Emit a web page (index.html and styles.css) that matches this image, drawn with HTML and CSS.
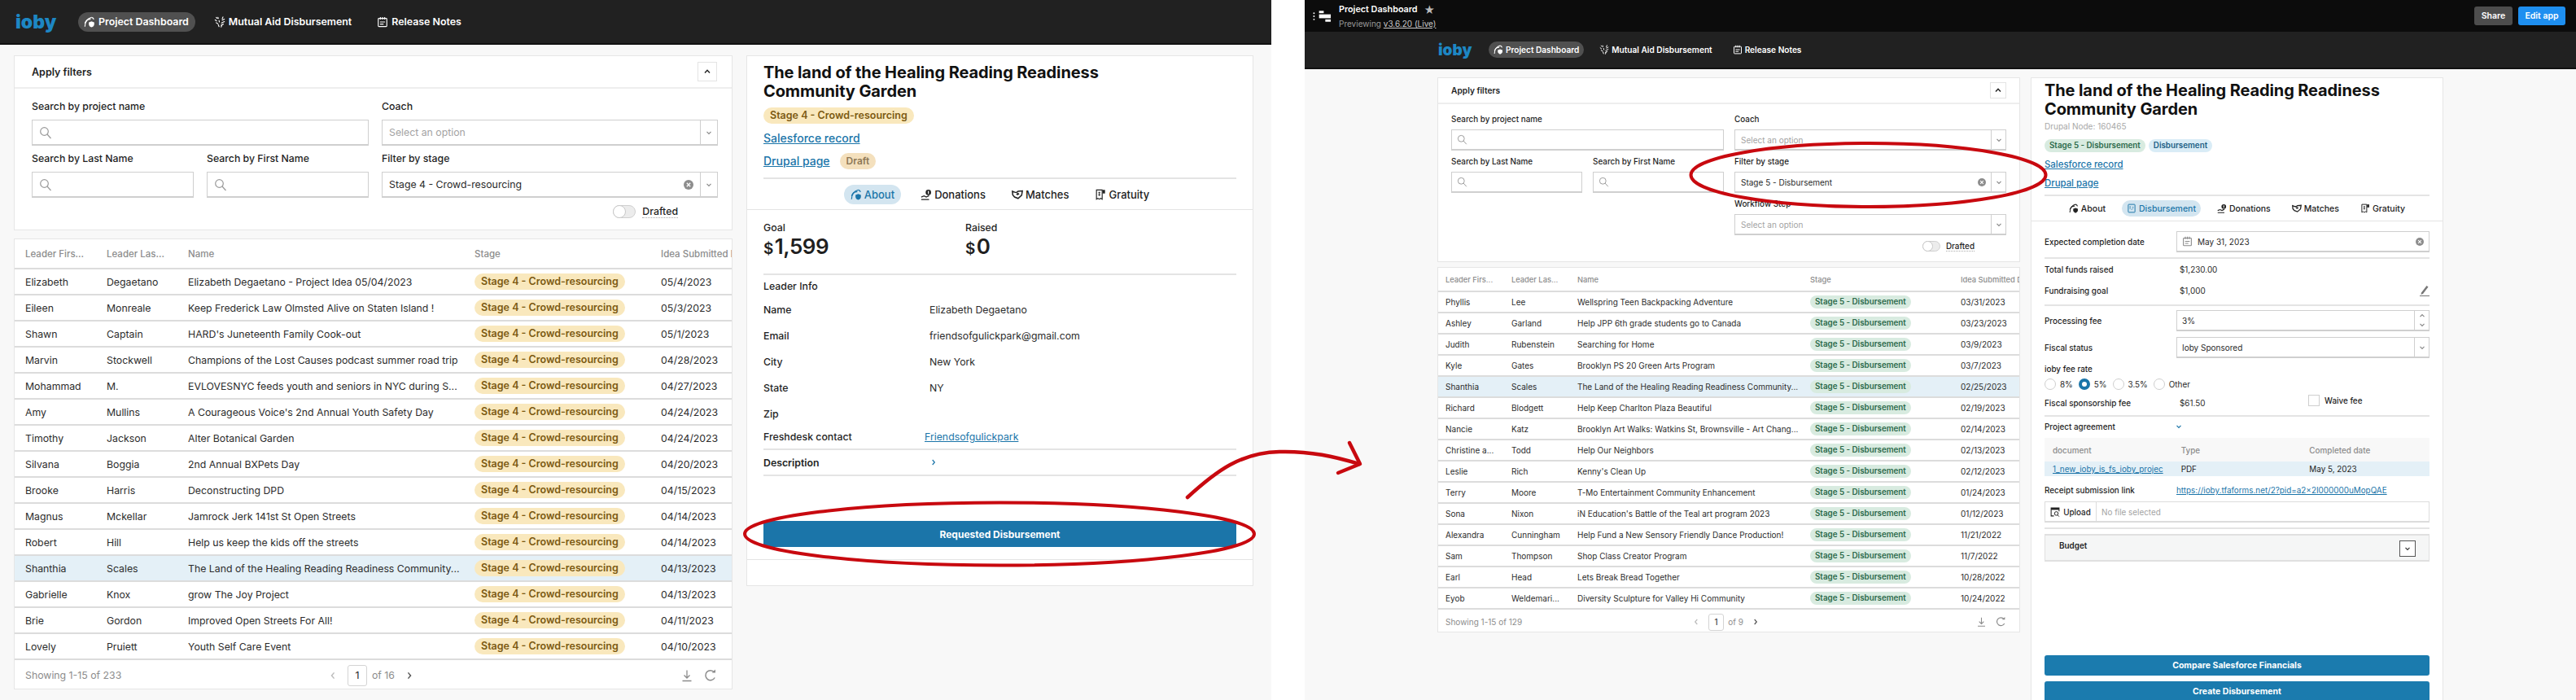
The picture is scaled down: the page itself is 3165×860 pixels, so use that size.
FILE: index.html
```html
<!DOCTYPE html>
<html lang="en">
<head>
<meta charset="utf-8">
<title>Project Dashboard</title>
<link rel="stylesheet" href="styles.css">
</head>
<body>
<svg class="defs" aria-hidden="true">
  <symbol id="i-home" viewBox="0 0 16 16"><path d="M1.5 14.5C1.5 8 5 2.5 11 1.5" fill="none" stroke="currentColor" stroke-width="1.4"/><path d="M1.5 10C3 6 6 4 9.5 4.2M11 1.5c1.6.4 2.6 1.400 3 3" fill="none" stroke="currentColor" stroke-width="1.400"/><path d="M7 8.500l3.800-1.300 3.800 1.300v2.500c0 2.200-1.600 3.600-3.800 4.500-2.200-.9-3.800-2.300-3.800-4.500z" fill="currentColor"/></symbol>
  <symbol id="i-wheat" viewBox="0 0 16 16"><g fill="none" stroke="currentColor" stroke-width="1.300" stroke-linecap="round"><path d="M3 1.500l1.500 1.500M1.500 5l2 1.500M3 9l2.500 1.500M6 12l1 2.500M10 15l1-3M12.500 1l-1 2.500M14.500 4l-3 1.500M14.500 7.500l-4 2M13 11l-3 1.500M5.500 1.500l.5 1.500M7 6l.5 2"/></g></symbol>
  <symbol id="i-cal" viewBox="0 0 16 16"><g fill="none" stroke="currentColor" stroke-width="1.300"><rect x="2" y="3" width="12" height="11.500" rx="1"/><path d="M5 1v3.500M8 1v3.500M11 1v3.500M4.500 8h7M4.500 11h5"/></g></symbol>
  <symbol id="i-don" viewBox="0 0 16 16"><circle cx="11" cy="5" r="3.800" fill="currentColor"/><rect x="10.300" y="3" width="1.400" height="4" fill="#fff"/><path d="M1 15h11M1 11.500l4-1.500 3 1.500 4-2" fill="none" stroke="currentColor" stroke-width="1.500"/></symbol>
  <symbol id="i-match" viewBox="0 0 16 16"><path d="M1 3.500l4 1.500h2l2-1.500 6-.5-1 6-5 4.500-5-2-2.500-3z" fill="none" stroke="currentColor" stroke-width="1.700"/><path d="M6 7l3-1.500 2 2-3 1.500z" fill="currentColor"/></symbol>
  <symbol id="i-grat" viewBox="0 0 16 16"><path d="M2.500 1.500h8v13l-2-1.200-2 1.200-2-1.200-2 1.200z" fill="none" stroke="currentColor" stroke-width="1.300"/><path d="M6.500 4v6M5 5.500h3M5 8.500h3" fill="none" stroke="currentColor"/><path d="M11 1.500h3.500v5H11z" fill="currentColor"/></symbol>
  <symbol id="i-doc" viewBox="0 0 16 16"><rect x="2.500" y="1.500" width="11" height="13" rx="1" fill="none" stroke="currentColor" stroke-width="1.300"/><path d="M5.500 4v5M7.500 10.500l3-3M9 6h2" fill="none" stroke="currentColor"/></symbol>
  <symbol id="i-upload" viewBox="0 0 16 16"><path d="M6 14.500H1.500v-13h13V7" fill="none" stroke="currentColor" stroke-width="1.400"/><path d="M1.500 1.500h13v3h-13z" fill="currentColor"/><circle cx="10" cy="10.500" r="3" fill="none" stroke="currentColor" stroke-width="1.300"/><path d="M12 13l2.500 2.500" stroke="currentColor" stroke-width="1.300"/></symbol>
  <symbol id="i-search" viewBox="0 0 16 16"><circle cx="6.500" cy="6.500" r="4.800" fill="none" stroke="currentColor" stroke-width="1.200"/><path d="M10 10l4.500 5" fill="none" stroke="currentColor" stroke-width="1.200"/></symbol>
  <symbol id="i-down" viewBox="0 0 10 10"><path d="M2.500 3.800L5 6.400l2.500-2.600" fill="none" stroke="currentColor" stroke-width="1.200"/></symbol>
  <symbol id="i-up" viewBox="0 0 10 10"><path d="M2.500 6.200L5 3.600l2.500 2.600" fill="none" stroke="currentColor" stroke-width="1.200"/></symbol>
  <symbol id="i-left" viewBox="0 0 10 10"><path d="M6.300 2L3.700 5l2.600 3" fill="none" stroke="currentColor" stroke-width="1.200"/></symbol>
  <symbol id="i-right" viewBox="0 0 10 10"><path d="M3.700 2l2.600 3-2.600 3" fill="none" stroke="currentColor" stroke-width="1.200"/></symbol>
  <symbol id="i-clear" viewBox="0 0 12 12"><circle cx="6" cy="6" r="6" fill="currentColor"/><path d="M3.800 3.800l4.400 4.400M8.200 3.800L3.800 8.200" stroke="#fff" stroke-width="1.300"/></symbol>
  <symbol id="i-dl" viewBox="0 0 16 16"><path d="M8 1.500v9M4.500 7.500L8 11l3.500-3.500M2.500 14.500h11" fill="none" stroke="currentColor" stroke-width="1.300"/></symbol>
  <symbol id="i-rf" viewBox="0 0 16 16"><path d="M13.200 10.500A6 6 0 1 1 12.500 3.800" fill="none" stroke="currentColor" stroke-width="1.500"/><path d="M9.500 4.500h4.500V.5z" fill="currentColor"/></symbol>
</svg>

<section class="screen screen-a">
  <nav class="nav">
    <span class="logo">ioby</span>
    <a class="nav-item is-active"><svg class="ico"><use href="#i-home"/></svg>Project Dashboard</a>
    <a class="nav-item"><svg class="ico"><use href="#i-wheat"/></svg>Mutual Aid Disbursement</a>
    <a class="nav-item"><svg class="ico"><use href="#i-cal"/></svg>Release Notes</a>
  </nav>
  <main class="main">
    <div class="col-list">
      <section class="card filters">
        <header class="filters-head"><h2>Apply filters</h2><button class="collapse"><svg><use href="#i-up"/></svg></button></header>
        <div class="filters-grid">
          <div class="field span-2"><label>Search by project name</label><div class="input"><svg class="search"><use href="#i-search"/></svg></div></div>
          <div class="field"><label>Coach</label><div class="input select"><span class="ph">Select an option</span><span class="arrow"><svg><use href="#i-down"/></svg></span></div></div>
          <div class="field"><label>Search by Last Name</label><div class="input"><svg class="search"><use href="#i-search"/></svg></div></div>
          <div class="field"><label>Search by First Name</label><div class="input"><svg class="search"><use href="#i-search"/></svg></div></div>
          <div class="field"><label>Filter by stage</label><div class="input select"><span class="val">Stage 4 - Crowd-resourcing</span><svg class="clear"><use href="#i-clear"/></svg><span class="arrow"><svg><use href="#i-down"/></svg></span></div></div>
        </div>
        <div class="toggle-row"><span class="toggle"></span><span class="toggle-label">Drafted</span></div>
      </section>
      <section class="card list">
        <table class="grid">
          <colgroup><col class="c1"><col class="c2"><col class="c3"><col class="c4"><col class="c5"></colgroup>
          <thead><tr><th>Leader Firs...</th><th>Leader Las...</th><th>Name</th><th>Stage</th><th>Idea Submitted D</th></tr></thead>
          <tbody>
            <tr><td>Elizabeth</td><td>Degaetano</td><td>Elizabeth Degaetano - Project Idea 05/04/2023</td><td><span class="badge yellow">Stage 4 - Crowd-resourcing</span></td><td>05/4/2023</td></tr>
            <tr><td>Eileen</td><td>Monreale</td><td>Keep Frederick Law Olmsted Alive on Staten Island !</td><td><span class="badge yellow">Stage 4 - Crowd-resourcing</span></td><td>05/3/2023</td></tr>
            <tr><td>Shawn</td><td>Captain</td><td>HARD's Juneteenth Family Cook-out</td><td><span class="badge yellow">Stage 4 - Crowd-resourcing</span></td><td>05/1/2023</td></tr>
            <tr><td>Marvin</td><td>Stockwell</td><td>Champions of the Lost Causes podcast summer road trip</td><td><span class="badge yellow">Stage 4 - Crowd-resourcing</span></td><td>04/28/2023</td></tr>
            <tr><td>Mohammad</td><td>M.</td><td>EVLOVESNYC feeds youth and seniors in NYC during S...</td><td><span class="badge yellow">Stage 4 - Crowd-resourcing</span></td><td>04/27/2023</td></tr>
            <tr><td>Amy</td><td>Mullins</td><td>A Courageous Voice's 2nd Annual Youth Safety Day</td><td><span class="badge yellow">Stage 4 - Crowd-resourcing</span></td><td>04/24/2023</td></tr>
            <tr><td>Timothy</td><td>Jackson</td><td>Alter Botanical Garden</td><td><span class="badge yellow">Stage 4 - Crowd-resourcing</span></td><td>04/24/2023</td></tr>
            <tr><td>Silvana</td><td>Boggia</td><td>2nd Annual BXPets Day</td><td><span class="badge yellow">Stage 4 - Crowd-resourcing</span></td><td>04/20/2023</td></tr>
            <tr><td>Brooke</td><td>Harris</td><td>Deconstructing DPD</td><td><span class="badge yellow">Stage 4 - Crowd-resourcing</span></td><td>04/15/2023</td></tr>
            <tr><td>Magnus</td><td>Mckellar</td><td>Jamrock Jerk 141st St Open Streets</td><td><span class="badge yellow">Stage 4 - Crowd-resourcing</span></td><td>04/14/2023</td></tr>
            <tr><td>Robert</td><td>Hill</td><td>Help us keep the kids off the streets</td><td><span class="badge yellow">Stage 4 - Crowd-resourcing</span></td><td>04/14/2023</td></tr>
            <tr class="is-selected"><td>Shanthia</td><td>Scales</td><td>The Land of the Healing Reading Readiness Community...</td><td><span class="badge yellow">Stage 4 - Crowd-resourcing</span></td><td>04/13/2023</td></tr>
            <tr><td>Gabrielle</td><td>Knox</td><td>grow The Joy Project</td><td><span class="badge yellow">Stage 4 - Crowd-resourcing</span></td><td>04/13/2023</td></tr>
            <tr><td>Brie</td><td>Gordon</td><td>Improved Open Streets For All!</td><td><span class="badge yellow">Stage 4 - Crowd-resourcing</span></td><td>04/11/2023</td></tr>
            <tr><td>Lovely</td><td>Pruiett</td><td>Youth Self Care Event</td><td><span class="badge yellow">Stage 4 - Crowd-resourcing</span></td><td>04/10/2023</td></tr>
          </tbody>
        </table>
        <footer class="list-foot">
          <span class="count">Showing 1-15 of 233</span>
          <div class="pager"><svg class="pg-arrow dim"><use href="#i-left"/></svg><span class="page-box">1</span><span class="of">of 16</span><svg class="pg-arrow"><use href="#i-right"/></svg></div>
          <div class="foot-tools"><svg><use href="#i-dl"/></svg><svg><use href="#i-rf"/></svg></div>
        </footer>
      </section>
    </div>
    <section class="card detail">
      <div class="detail-head">
        <h1>The land of the Healing Reading Readiness Community Garden</h1>
        <div class="badges"><span class="badge yellow">Stage 4 - Crowd-resourcing</span></div>
        <a class="big-link">Salesforce record</a>
        <div class="link-row"><a class="big-link">Drupal page</a><span class="badge draft">Draft</span></div>
        <hr class="rule">
      </div>
      <div class="tabs">
        <a class="tab is-active"><svg class="ico"><use href="#i-home"/></svg>About</a>
        <a class="tab"><svg class="ico"><use href="#i-don"/></svg>Donations</a>
        <a class="tab"><svg class="ico"><use href="#i-match"/></svg>Matches</a>
        <a class="tab"><svg class="ico"><use href="#i-grat"/></svg>Gratuity</a>
      </div>
      <div class="about">
        <div class="stats">
          <div><div class="stat-label">Goal</div><div class="stat-val"><small>$</small>1,599</div></div>
          <div><div class="stat-label">Raised</div><div class="stat-val"><small>$</small>0</div></div>
        </div>
        <hr class="rule">
        <h3>Leader Info</h3>
        <dl class="info">
          <div><dt>Name</dt><dd>Elizabeth Degaetano</dd></div>
          <div><dt>Email</dt><dd>friendsofgulickpark@gmail.com</dd></div>
          <div><dt>City</dt><dd>New York</dd></div>
          <div><dt>State</dt><dd>NY</dd></div>
          <div><dt>Zip</dt><dd></dd></div>
          <div class="short"><dt>Freshdesk contact</dt><dd class="nudge"><a>Friendsofgulickpark</a></dd></div>
        </dl>
        <hr class="rule r-info">
        <div class="desc"><strong>Description</strong><svg><use href="#i-right"/></svg></div>
        <hr class="rule">
        <button class="primary req">Requested Disbursement</button>
      </div>
      <div class="detail-foot"></div>
    </section>
  </main>
</section>

<section class="screen screen-b">
  <header class="topbar">
    <div class="tb-left">
      <svg class="tb-icon" viewBox="0 0 24 16"><g fill="#fff"><circle cx="1.500" cy="4" r="1"/><circle cx="1.500" cy="8" r="1"/><circle cx="1.500" cy="12" r="1"/><rect x="8" y="1" width="6" height="3"/><rect x="8" y="5.500" width="15" height="5"/><rect x="16" y="12" width="7" height="3"/></g></svg>
      <div class="tb-titles">
        <div class="tb-title">Project Dashboard <span class="star">★</span></div>
        <div class="tb-sub">Previewing <u>v3.6.20 (Live)</u></div>
      </div>
    </div>
    <div class="tb-actions"><button class="btn-share">Share</button><button class="btn-edit">Edit app</button></div>
  </header>
  <nav class="nav">
    <span class="logo">ioby</span>
    <a class="nav-item is-active"><svg class="ico"><use href="#i-home"/></svg>Project Dashboard</a>
    <a class="nav-item"><svg class="ico"><use href="#i-wheat"/></svg>Mutual Aid Disbursement</a>
    <a class="nav-item"><svg class="ico"><use href="#i-cal"/></svg>Release Notes</a>
  </nav>
  <main class="main">
    <div class="col-list">
      <section class="card filters">
        <header class="filters-head"><h2>Apply filters</h2><button class="collapse"><svg><use href="#i-up"/></svg></button></header>
        <div class="filters-grid">
          <div class="field span-2"><label>Search by project name</label><div class="input"><svg class="search"><use href="#i-search"/></svg></div></div>
          <div class="field"><label>Coach</label><div class="input select"><span class="ph">Select an option</span><span class="arrow"><svg><use href="#i-down"/></svg></span></div></div>
          <div class="field"><label>Search by Last Name</label><div class="input"><svg class="search"><use href="#i-search"/></svg></div></div>
          <div class="field"><label>Search by First Name</label><div class="input"><svg class="search"><use href="#i-search"/></svg></div></div>
          <div class="field"><label>Filter by stage</label><div class="input select"><span class="val">Stage 5 - Disbursement</span><svg class="clear"><use href="#i-clear"/></svg><span class="arrow"><svg><use href="#i-down"/></svg></span></div></div>
          <div class="field col-3"><label>Workflow Step</label><div class="input select"><span class="ph">Select an option</span><span class="arrow"><svg><use href="#i-down"/></svg></span></div></div>
        </div>
        <div class="toggle-row"><span class="toggle"></span><span class="toggle-label">Drafted</span></div>
      </section>
      <section class="card list">
        <table class="grid">
          <colgroup><col class="c1"><col class="c2"><col class="c3"><col class="c4"><col class="c5"></colgroup>
          <thead><tr><th>Leader Firs...</th><th>Leader Las...</th><th>Name</th><th>Stage</th><th>Idea Submitted D</th></tr></thead>
          <tbody>
            <tr><td>Phyllis</td><td>Lee</td><td>Wellspring Teen Backpacking Adventure</td><td><span class="badge green">Stage 5 - Disbursement</span></td><td>03/31/2023</td></tr>
            <tr><td>Ashley</td><td>Garland</td><td>Help JPP 6th grade students go to Canada</td><td><span class="badge green">Stage 5 - Disbursement</span></td><td>03/23/2023</td></tr>
            <tr><td>Judith</td><td>Rubenstein</td><td>Searching for Home</td><td><span class="badge green">Stage 5 - Disbursement</span></td><td>03/9/2023</td></tr>
            <tr><td>Kyle</td><td>Gates</td><td>Brooklyn PS 20 Green Arts Program</td><td><span class="badge green">Stage 5 - Disbursement</span></td><td>03/7/2023</td></tr>
            <tr class="is-selected"><td>Shanthia</td><td>Scales</td><td>The Land of the Healing Reading Readiness Community...</td><td><span class="badge green">Stage 5 - Disbursement</span></td><td>02/25/2023</td></tr>
            <tr><td>Richard</td><td>Blodgett</td><td>Help Keep Charlton Plaza Beautiful</td><td><span class="badge green">Stage 5 - Disbursement</span></td><td>02/19/2023</td></tr>
            <tr><td>Nancie</td><td>Katz</td><td>Brooklyn Art Walks: Watkins St, Brownsville - Art Chang...</td><td><span class="badge green">Stage 5 - Disbursement</span></td><td>02/14/2023</td></tr>
            <tr><td>Christine a...</td><td>Todd</td><td>Help Our Neighbors</td><td><span class="badge green">Stage 5 - Disbursement</span></td><td>02/13/2023</td></tr>
            <tr><td>Leslie</td><td>Rich</td><td>Kenny's Clean Up</td><td><span class="badge green">Stage 5 - Disbursement</span></td><td>02/12/2023</td></tr>
            <tr><td>Terry</td><td>Moore</td><td>T-Mo Entertainment Community Enhancement</td><td><span class="badge green">Stage 5 - Disbursement</span></td><td>01/24/2023</td></tr>
            <tr><td>Sona</td><td>Nixon</td><td>iN Education's Battle of the Teal art program 2023</td><td><span class="badge green">Stage 5 - Disbursement</span></td><td>01/12/2023</td></tr>
            <tr><td>Alexandra</td><td>Cunningham</td><td>Help Fund a New Sensory Friendly Dance Production!</td><td><span class="badge green">Stage 5 - Disbursement</span></td><td>11/21/2022</td></tr>
            <tr><td>Sam</td><td>Thompson</td><td>Shop Class Creator Program</td><td><span class="badge green">Stage 5 - Disbursement</span></td><td>11/7/2022</td></tr>
            <tr><td>Earl</td><td>Head</td><td>Lets Break Bread Together</td><td><span class="badge green">Stage 5 - Disbursement</span></td><td>10/28/2022</td></tr>
            <tr><td>Eyob</td><td>Weldemari...</td><td>Diversity Sculpture for Valley Hi Community</td><td><span class="badge green">Stage 5 - Disbursement</span></td><td>10/24/2022</td></tr>
          </tbody>
        </table>
        <footer class="list-foot">
          <span class="count">Showing 1-15 of 129</span>
          <div class="pager"><svg class="pg-arrow dim"><use href="#i-left"/></svg><span class="page-box">1</span><span class="of">of 9</span><svg class="pg-arrow"><use href="#i-right"/></svg></div>
          <div class="foot-tools"><svg><use href="#i-dl"/></svg><svg><use href="#i-rf"/></svg></div>
        </footer>
      </section>
    </div>
    <section class="card detail">
      <div class="detail-head">
        <h1>The land of the Healing Reading Readiness Community Garden</h1>
        <div class="node">Drupal Node: 160465</div>
        <div class="badges"><span class="badge green">Stage 5 - Disbursement</span><span class="badge blue">Disbursement</span></div>
        <a class="big-link">Salesforce record</a>
        <div class="link-row"><a class="big-link">Drupal page</a></div>
        <hr class="rule">
      </div>
      <div class="tabs">
        <a class="tab"><svg class="ico"><use href="#i-home"/></svg>About</a>
        <a class="tab is-active"><svg class="ico"><use href="#i-doc"/></svg>Disbursement</a>
        <a class="tab"><svg class="ico"><use href="#i-don"/></svg>Donations</a>
        <a class="tab"><svg class="ico"><use href="#i-match"/></svg>Matches</a>
        <a class="tab"><svg class="ico"><use href="#i-grat"/></svg>Gratuity</a>
      </div>
      <div class="form">
        <div class="frow f-date"><span class="flabel">Expected completion date</span><div class="input"><svg class="cal"><use href="#i-cal"/></svg><span class="val">May 31, 2023</span><svg class="clear"><use href="#i-clear"/></svg></div></div>
        <hr class="rule r-date">
        <div class="frow f-text"><span class="flabel">Total funds raised</span><span class="fval">$1,230.00</span></div>
        <div class="frow f-text"><span class="flabel">Fundraising goal</span><span class="fval">$1,000</span><svg class="pencil" viewBox="0 0 12 14"><path d="M2 9.500L8.500 1l2 1.500L4 11l-2.500 1z" fill="currentColor"/><path d="M0 13.500h12" stroke="currentColor"/></svg></div>
        <hr class="rule r-goal">
        <div class="frow f-fee"><span class="flabel">Processing fee</span><div class="input"><span class="val">3%</span><span class="stepper"><svg><use href="#i-up"/></svg><svg><use href="#i-down"/></svg></span></div></div>
        <div class="frow f-fiscal"><span class="flabel">Fiscal status</span><div class="input select"><span class="val">Ioby Sponsored</span><span class="arrow"><svg><use href="#i-down"/></svg></span></div></div>
        <div class="flabel rate-label">ioby fee rate</div>
        <div class="radios">
          <span class="radio"></span><span>8%</span>
          <span class="radio is-on"></span><span>5%</span>
          <span class="radio"></span><span>3.5%</span>
          <span class="radio"></span><span>Other</span>
        </div>
        <div class="frow f-sponsor"><span class="flabel">Fiscal sponsorship fee</span><span class="fval">$61.50</span><span class="waive"><span class="check"></span>Waive fee</span></div>
        <hr class="rule r-sponsor">
        <div class="frow f-agree"><strong class="flabel">Project agreement</strong><svg class="agree-chev"><use href="#i-down"/></svg></div>
        <table class="docs">
          <thead><tr><th>document</th><th>Type</th><th>Completed date</th></tr></thead>
          <tbody><tr><td><a>1_new_ioby_is_fs_ioby_projec</a></td><td>PDF</td><td>May 5, 2023</td></tr></tbody>
        </table>
        <div class="frow f-receipt"><strong class="flabel">Receipt submission link</strong><a class="receipt-link">https://ioby.tfaforms.net/2?pid=a2x2I000000uMopQAE</a></div>
        <div class="upload"><span class="up-btn"><svg class="ico"><use href="#i-upload"/></svg>Upload</span><span class="up-file">No file selected</span></div>
        <hr class="rule r-upload">
        <div class="budget"><strong>Budget</strong><span class="budget-btn"><svg><use href="#i-down"/></svg></span></div>
        <button class="primary rounded compare">Compare Salesforce Financials</button>
        <button class="primary rounded create">Create Disbursement</button>
      </div>
    </section>
  </main>
</section>

<svg class="marks" viewBox="0 0 3165 860" aria-hidden="true">
  <g fill="none" stroke="#c8090f" stroke-linecap="round" stroke-linejoin="round">
    <ellipse cx="1228" cy="656" rx="313" ry="38.500" stroke-width="4"/>
    <ellipse cx="2295.500" cy="215" rx="218" ry="39" stroke-width="4"/>
    <path d="M1459 611C1495 578 1525 556 1572 555C1610 554 1640 561 1670 570" stroke-width="4.500"/>
    <path d="M1658 544L1671 570L1644 581" stroke-width="4.500"/>
  </g>
</svg>
</body>
</html>
```
FILE: styles.css
```css
* { box-sizing: border-box; }
html, body { margin: 0; padding: 0; }
body {
  width: 3165px;
  height: 860px;
  overflow: hidden;
  position: relative;
  display: flex;
  gap: 41px;
  background: #fff;
  font-family: Inter, "Noto Sans", sans-serif;
  color: #1f1f1f;
}
.defs { position: absolute; width: 0; height: 0; }
.marks { position: absolute; left: 0; top: 0; width: 3165px; height: 860px; pointer-events: none; }
svg { display: block; }
hr.rule { border: 0; height: 2px; margin: 0; background: #e4e4e4; }
a { color: #1b75a9; text-decoration: underline; }
h1, h2, h3 { margin: 0; }
button { font-family: inherit; border: 0; padding: 0; }

.screen { width: 1562px; height: 860px; flex: none; overflow: hidden; background: #f8f8f8; display: flex; flex-direction: column; }
.main { display: flex; align-items: flex-start; flex: 1; min-height: 0; }
.col-list { display: flex; flex-direction: column; flex: none; }
.card { background: #fff; border: 1px solid #e6e6e6; }

.nav { display: flex; align-items: center; background: #212121; border-bottom: 2px solid #111; color: #fff; flex: none; }
.logo { color: #1d87c4; font-weight: 900; letter-spacing: 0; }
.nav-item { display: flex; align-items: center; color: #fff; text-decoration: none; font-weight: 600; border-radius: 12px; }
.nav-item.is-active { background: #505050; }
.ico { flex: none; }

.filters-head { display: flex; align-items: center; justify-content: space-between; border-bottom: 2px solid #eee; }
.filters-head h2 { font-weight: 600; }
.collapse { display: flex; align-items: center; justify-content: center; background: #fff; border: 1px solid #e4e4e4; color: #222; }
.collapse svg { width: 12px; height: 12px; }
.filters-grid { display: grid; }
.span-2 { grid-column: span 2; }
.col-3 { grid-column: 3; }
.field label { display: block; font-weight: 500; }
.input { position: relative; display: flex; align-items: center; background: #fff; border: 1px solid #cfcfcf; border-bottom-width: 2px; }
.search { width: 16px; height: 16px; color: #9a9a9a; margin-left: 8px; }
.ph { color: #a3a3a3; padding-left: 8px; flex: 1; }
.val { padding-left: 8px; color: #2a2a2a; flex: 1; }
.arrow { display: flex; align-items: center; justify-content: center; border-left: 1px solid #cfcfcf; align-self: stretch; color: #8a8a8a; }
.arrow svg { width: 10px; height: 10px; }
.clear { width: 12px; height: 12px; color: #8d8d8d; margin-right: 8px; flex: none; }
.toggle-row { display: flex; align-items: center; justify-content: flex-end; }
.toggle { display: block; border: 1px solid #d0d0d0; border-radius: 10px; background: #ececec; position: relative; }
.toggle::before { content: ""; position: absolute; left: -1px; top: -1px; bottom: -1px; aspect-ratio: 1; border-radius: 50%; background: #fff; border: 1px solid #c8c8c8; }
.toggle-label { font-weight: 500; border-bottom: 1px dotted #aaa; }

.grid { width: 100%; border-collapse: collapse; table-layout: fixed; }
.grid th { text-align: left; font-weight: 500; color: #8c8c8c; white-space: nowrap; overflow: hidden; border-bottom: 2px solid #dcdcdc; }
.grid td { color: #2c2c2c; white-space: nowrap; overflow: hidden; border-bottom: 2px solid #dcdcdc; }
.is-selected td { background: #e4f0f7; }
.badge { display: inline-block; font-weight: 600; border-radius: 12px; white-space: nowrap; }
.yellow { background: #f9e8bd; color: #7c5a12; }
.draft { background: #f4e0bd; color: #8d7856; }
.green { background: #d8ebe0; color: #2c6a4b; }
.blue { background: #d9ecf6; color: #1c5f85; }

.list-foot { display: grid; grid-template-columns: 1fr auto 1fr; align-items: center; }
.count { color: #8c8c8c; }
.pager { display: flex; align-items: center; }
.pg-arrow { width: 12px; height: 12px; color: #555; }
.pg-arrow.dim { color: #bbb; }
.page-box { display: flex; align-items: center; justify-content: center; border: 1px solid #d4d4d4; border-radius: 3px; color: #222; }
.of { color: #8c8c8c; }
.foot-tools { display: flex; justify-content: flex-end; color: #8c8c8c; }

.detail { display: flex; flex-direction: column; flex: none; }
.detail h1 { font-weight: 700; color: #111; letter-spacing: -0.1px; }
.big-link { display: block; font-weight: 500; }
.badges { display: flex; }
.link-row { display: flex; align-items: center; }
.tabs { display: flex; justify-content: center; align-items: center; border-bottom: 1px solid #e4e4e4; }
.tab { display: flex; align-items: center; font-weight: 500; color: #222; text-decoration: none; border-radius: 12px; }
.tab.is-active { background: #d3e5f0; color: #1b75a9; }
.primary { display: block; width: 100%; background: #1b75a9; color: #fff; font-weight: 700; }

/* ---------- first screen ---------- */
.screen-a .nav { height: 55px; padding-left: 19px; }
.screen-a .logo { font-size: 23px; width: 77px; }
.screen-a .nav-item { font-size: 12.400px; height: 24px; padding: 0 8px 0 7px; }
.screen-a .nav-item .ico { width: 14px; height: 16px; margin-right: 4px; }
.screen-a .nav-item + .nav-item { margin-left: 16px; }
.screen-a .main { padding: 13px 0 0 17px; gap: 17px; }
.screen-a .col-list { width: 883px; gap: 10px; }
.screen-a .filters { height: 215px; }
.screen-a .filters-head { height: 40px; padding: 0 18px 0 21px; }
.screen-a .filters-head h2 { font-size: 12.500px; }
.screen-a .collapse { width: 24px; height: 24px; }
.screen-a .filters-grid { grid-template-columns: 199px 199px 413px; column-gap: 16px; row-gap: 8px; padding: 14px 0 0 21px; }
.screen-a .field label { font-size: 12.300px; line-height: 16px; margin-bottom: 8px; }
.screen-a .input { height: 32px; }
.screen-a .ph, .screen-a .val { font-size: 12.300px; }
.screen-a .arrow { width: 21px; }
.screen-a .toggle-row { margin-top: 8px; gap: 8px; padding-right: 66px; height: 18px; }
.screen-a .toggle { width: 28px; height: 16px; }
.screen-a .toggle-label { font-size: 12.300px; }
.screen-a .list { height: 554px; }
.screen-a .c1, .screen-a .c2 { width: 100px; }
.screen-a .c3 { width: 352px; }
.screen-a .c4 { width: 229px; }
.screen-a .grid th { height: 36px; font-size: 11.500px; padding-left: 13px; }
.screen-a .grid td { height: 32px; font-size: 12.300px; padding-left: 13px; }
.screen-a .badge { font-size: 12.500px; line-height: 20px; padding: 0 8px; }
.screen-a .list-foot { height: 37px; padding: 0 18px 0 13px; }
.screen-a .count { font-size: 12.300px; }
.screen-a .pager { gap: 6px; font-size: 12.300px; }
.screen-a .page-box { width: 24px; height: 26px; font-size: 12.300px; margin-left: 6px; }
.screen-a .of { font-size: 12.300px; margin-right: 6px; }
.screen-a .foot-tools { gap: 13px; }
.screen-a .foot-tools svg { width: 16px; height: 18px; }
.screen-a .detail { width: 623px; height: 652px; }
.screen-a .detail-head { padding: 9px 20px 0; }
.screen-a .detail h1 { font-size: 20px; line-height: 23px; max-width: 480px; }
.screen-a .badges { margin-top: 8px; }
.screen-a .big-link { font-size: 14px; line-height: 20px; margin-top: 8px; }
.screen-a .link-row { margin-top: 8px; gap: 12px; }
.screen-a .link-row .big-link { margin-top: 0; }
.screen-a .draft { font-size: 12px; padding: 0 8px; }
.screen-a .detail-head hr { margin-top: 10px; }
.screen-a .tabs { height: 38px; gap: 16px; }
.screen-a .tab { font-size: 13px; height: 24px; padding: 0 8px; }
.screen-a .tab .ico { width: 14px; height: 16px; margin-right: 3px; }
.screen-a .about { padding: 14px 20px 0; flex: 1; }
.screen-a .stats { display: grid; grid-template-columns: 248px 1fr; height: 64px; }
.screen-a .stat-label { font-size: 12.300px; line-height: 16px; font-weight: 500; }
.screen-a .stat-val { font-size: 26px; line-height: 30px; font-weight: 600; letter-spacing: -0.5px; }
.screen-a .stat-val small { font-size: 19px; margin-right: 2px; }
.screen-a h3 { font-size: 12.300px; line-height: 16px; font-weight: 500; margin-top: 6px; margin-bottom: 4px; }
.screen-a .info { margin: 0; }
.screen-a .info > div { display: flex; align-items: center; height: 32px; font-size: 12.300px; }
.screen-a .info > div.short { height: 24px; }
.screen-a .info dt { width: 204px; font-weight: 500; }
.screen-a .info dd { margin: 0; color: #2c2c2c; }
.screen-a .info dd.nudge { margin-left: -6px; }
.screen-a hr.r-info { margin-top: 3px; }
.screen-a .desc { display: flex; align-items: center; height: 30px; font-size: 12.300px; }
.screen-a .desc strong { width: 204px; font-weight: 600; }
.screen-a .desc svg { width: 10px; height: 12px; color: #1b75a9; }
.screen-a .req { height: 32px; margin-top: 55px; font-size: 12px; }
.screen-a .detail-foot { height: 32px; border-top: 1px solid #e4e4e4; }

/* ---------- second screen ---------- */
.topbar { height: 39px; background: #0c0c0c; display: flex; align-items: center; justify-content: space-between; padding: 0 13px 0 10px; flex: none; }
.tb-left { display: flex; align-items: center; gap: 9px; }
.tb-icon { width: 23px; height: 16px; }
.tb-title { color: #fff; font-size: 10.800px; font-weight: 600; line-height: 16px; display: flex; gap: 8px; }
.star { color: #bbb; font-size: 13px; }
.tb-sub { color: #9a9a9a; font-size: 10px; line-height: 14px; margin-top: 2px; }
.tb-sub u { color: #c8c8c8; }
.tb-actions { display: flex; gap: 7px; }
.btn-share, .btn-edit { height: 23px; border-radius: 3px; color: #fff; font-size: 10.500px; font-weight: 600; }
.btn-share { width: 47px; background: #4d4d4d; }
.btn-edit { width: 58px; background: #1e8ff0; }
.screen-b .nav { height: 46px; padding-left: 164px; }
.screen-b .logo { font-size: 19px; width: 62px; }
.screen-b .nav-item { font-size: 10.100px; height: 20px; padding: 0 6px 0 6px; border-radius: 10px; }
.screen-b .nav-item .ico { width: 12px; height: 14px; margin-right: 3px; }
.screen-b .nav-item + .nav-item { margin-left: 13px; }
.screen-b .main { padding: 10px 0 0 163px; gap: 13px; }
.screen-b .col-list { width: 716px; gap: 6px; }
.screen-b .filters { height: 227px; }
.screen-b .filters-head { height: 32px; padding: 0 16px; }
.screen-b .filters-head h2 { font-size: 10.200px; }
.screen-b .collapse { width: 20px; height: 20px; }
.screen-b .filters-grid { grid-template-columns: 161px 161px 334px; column-gap: 13px; row-gap: 6px; padding: 11px 0 0 16px; }
.screen-b .field label { font-size: 9.900px; line-height: 14px; margin-bottom: 6px; }
.screen-b .input { height: 26px; }
.screen-b .search { width: 13px; height: 13px; margin-left: 6px; }
.screen-b .ph, .screen-b .val { font-size: 10px; padding-left: 7px; }
.screen-b .arrow { width: 18px; }
.screen-b .clear { width: 10px; height: 10px; margin-right: 6px; }
.screen-b .toggle-row { margin-top: 6px; gap: 7px; padding-right: 55px; height: 14px; }
.screen-b .toggle { width: 22px; height: 13px; }
.screen-b .toggle-label { font-size: 9.900px; }
.screen-b .list { height: 449px; }
.screen-b .c1, .screen-b .c2 { width: 81px; }
.screen-b .c3 { width: 286px; }
.screen-b .c4 { width: 185px; }
.screen-b .grid th { height: 29px; font-size: 9.300px; padding-left: 9px; }
.screen-b .grid td { height: 26px; font-size: 10px; padding-left: 9px; }
.screen-b .badge { font-size: 9.800px; line-height: 16px; padding: 0 6px; border-radius: 9px; }
.screen-b .list-foot { height: 30px; padding: 0 16px 0 9px; }
.screen-b .count { font-size: 10px; }
.screen-b .pager { gap: 5px; font-size: 10px; }
.screen-b .pg-arrow { width: 10px; height: 10px; }
.screen-b .page-box { width: 19px; height: 21px; font-size: 10px; margin-left: 5px; }
.screen-b .of { font-size: 10px; margin-right: 5px; }
.screen-b .foot-tools { gap: 11px; }
.screen-b .foot-tools svg { width: 13px; height: 14px; }
.screen-b .detail { width: 507px; height: 800px; }
.screen-b .detail-head { padding: 4px 16px 0; }
.screen-b .detail h1 { font-size: 20px; line-height: 23px; max-width: 460px; }
.node { font-size: 10px; line-height: 14px; margin-top: 2px; color: #a8a8a8; }
.screen-b .badges { margin-top: 9px; gap: 4px; }
.screen-b .big-link { font-size: 11.400px; line-height: 16px; margin-top: 7px; }
.screen-b .link-row { margin-top: 7px; }
.screen-b .link-row .big-link { margin-top: 0; }
.screen-b .detail-head hr { margin-top: 6px; }
.screen-b .tabs { height: 31px; gap: 14px; }
.screen-b .tab { font-size: 10.500px; height: 20px; padding: 0 6px; border-radius: 10px; }
.screen-b .tab .ico { width: 12px; height: 14px; margin-right: 3px; }
.form { padding: 12px 16px 0; }
.frow { display: flex; align-items: center; font-size: 9.900px; position: relative; }
.frow .input { flex: 1; }
.flabel { width: 162px; flex: none; font-weight: 500; font-size: 9.900px; }
.fval { padding-left: 4px; color: #2c2c2c; }
.f-date { height: 26px; }
.f-fee { height: 26px; margin-top: 5px; }
.cal { width: 13px; height: 13px; margin-left: 6px; color: #888; }
.screen-b .form .val { padding-left: 6px; }
hr.r-date { margin-top: 6px; }
.f-text { height: 26px; }
hr.r-goal { margin-top: 4px; }
.pencil { width: 12px; height: 14px; color: #777; position: absolute; right: 0; top: 6px; }
.stepper { display: flex; flex-direction: column; justify-content: space-around; align-items: center; width: 18px; align-self: stretch; border-left: 1px solid #cfcfcf; color: #888; }
.stepper svg { width: 10px; height: 10px; }
.f-fiscal { height: 26px; margin-top: 7px; }
.rate-label { line-height: 16px; margin-top: 5px; }
.radios { display: flex; align-items: center; height: 16px; margin-top: 3px; font-size: 9.900px; gap: 5px; }
.radio { width: 14px; height: 14px; border-radius: 50%; border: 1px solid #cfcfcf; background: #fff; }
.radios .radio:not(:first-child) { margin-left: 2px; }
.radio.is-on { border: 4px solid #1b75a9; }
.f-sponsor { height: 26px; margin-top: 2px; }
.waive { position: absolute; left: 324px; top: 3px; display: flex; align-items: center; gap: 6px; font-weight: 500; }
.check { width: 14px; height: 14px; border: 1px solid #cfcfcf; }
hr.r-sponsor { margin-top: 2px; }
.f-agree { height: 20px; margin-top: 2px; }
.agree-chev { width: 10px; height: 10px; color: #1b75a9; margin-left: -2px; }
.docs { width: 100%; border-collapse: collapse; table-layout: fixed; margin-top: 4px; font-size: 9.900px; }
.docs th { height: 29px; text-align: left; font-weight: 500; color: #8c8c8c; background: #f8f8f8; padding-left: 10px; }
.docs td { height: 18px; background: #e4f0f7; padding-left: 10px; white-space: nowrap; overflow: hidden; }
.f-receipt { height: 20px; margin-top: 7px; }
.upload { display: flex; height: 26px; margin-top: 4px; border: 1px solid #dcdcdc; border-bottom-width: 2px; font-size: 9.900px; align-items: center; }
.up-btn { width: 63px; height: 100%; display: flex; align-items: center; justify-content: center; gap: 4px; border-right: 1px solid #dcdcdc; font-weight: 500; }
.up-btn .ico { width: 12px; height: 14px; }
.up-file { padding-left: 6px; color: #a3a3a3; }
hr.r-upload { margin-top: 6px; }
.budget { display: flex; justify-content: space-between; height: 34px; margin-top: 6px; padding: 6px 16px 0 17px; background: #f5f6f6; border: 1px solid #e0e0e0; border-top-width: 2px; border-bottom-width: 2px; font-size: 9.900px; }
.budget strong { font-weight: 600; }
.budget-btn { display: flex; align-items: center; justify-content: center; width: 20px; height: 20px; background: #fff; border: 1px solid #555; color: #333; }
.budget-btn svg { width: 10px; height: 10px; }
.rounded { border-radius: 3px; height: 25px; font-size: 10.500px; background: #1b7bae; }
.compare { margin-top: 115px; }
.create { margin-top: 7px; }
```
